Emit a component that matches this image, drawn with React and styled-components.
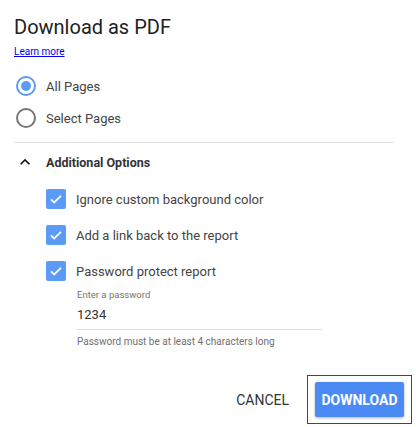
import React from "react";
import styled, { createGlobalStyle } from "styled-components";

const Global = createGlobalStyle`
  html, body { margin: 0; padding: 0; background: #fff; }
  body { font-family: Roboto, "Noto Sans", Arial, sans-serif; }
  * { box-sizing: border-box; }
`;

const Dialog = styled.div`
  width: 416px;
  height: 427px;
  padding: 15px 0 0 14px;
  background: #fff;
  color: #212121;
`;

const Body = styled.div`
  padding-right: 22px;
`;

const Title = styled.h1`
  margin: 0;
  font-size: 20px;
  line-height: 24px;
  font-weight: 400;
  color: #212121;
`;

const LearnMore = styled.a`
  display: block;
  margin-top: 7px;
  font-size: 10px;
  line-height: 12px;
  color: #0000ee;
  text-decoration: underline;
  width: max-content;
`;

const RadioGroup = styled.div`
  margin-top: 12px;
  display: flex;
  flex-direction: column;
`;

const RadioRow = styled.label`
  display: flex;
  align-items: center;
  gap: 10px;
  height: 32px;
  padding-left: 2px;
  font-size: 13px;
  color: #444;
`;

const RadioCircle = styled.span`
  width: 20px;
  height: 20px;
  border-radius: 50%;
  border: 2px solid ${(p) => (p.$checked ? "#5b9bf6" : "#767676")};
  display: flex;
  align-items: center;
  justify-content: center;
  &::after {
    content: "";
    width: 10px;
    height: 10px;
    border-radius: 50%;
    background: #5b9bf6;
    display: ${(p) => (p.$checked ? "block" : "none")};
  }
`;

const Divider = styled.hr`
  margin: 8px 0 0;
  border: 0;
  height: 1px;
  background: #e0e0e0;
`;

const SectionHeader = styled.div`
  display: flex;
  align-items: center;
  height: 38px;
  gap: 11px;
  font-size: 12.5px;
  font-weight: 700;
  color: #333;
`;

const CheckRow = styled.label`
  display: flex;
  align-items: center;
  gap: 10px;
  height: 36px;
  padding-left: 32px;
  font-size: 13px;
  color: #444;
`;

const CheckBox = styled.span`
  width: 20px;
  height: 20px;
  border-radius: 2px;
  background: #5b9bf6;
  display: flex;
  align-items: center;
  justify-content: center;
`;

const Field = styled.div`
  padding-left: 63px;
  display: flex;
  flex-direction: column;
`;

const FieldLabel = styled.span`
  font-size: 9.5px;
  line-height: 12px;
  color: #757575;
`;

const Input = styled.div`
  width: 245px;
  margin-top: 6px;
  padding-bottom: 6px;
  font-size: 13px;
  line-height: 16px;
  color: #333;
  border-bottom: 1px solid #dcdcdc;
`;

const Helper = styled.span`
  margin-top: 6px;
  font-size: 10px;
  line-height: 12px;
  color: #707070;
`;

const Actions = styled.div`
  margin-top: 27px;
  display: flex;
  justify-content: flex-end;
  align-items: center;
  padding-right: 4px;
`;

const FlatButton = styled.button`
  height: 35px;
  padding: 0 8px;
  margin-right: 10px;
  border: 0;
  background: transparent;
  font-family: inherit;
  font-size: 14px;
  color: #333;
  cursor: pointer;
`;

const Highlight = styled.div`
  padding: 7px 8px;
  background: #fff;
  box-shadow: inset 0 0 0 1px rgb(235, 0, 0);
`;

const PrimaryButton = styled.button`
  display: block;
  height: 35px;
  width: 89px;
  padding: 0;
  border: 0;
  border-radius: 2px;
  background: #4a8af4;
  color: #fff;
  font-family: inherit;
  font-size: 14px;
  font-weight: 700;
  box-shadow: 0 1px 3px rgba(0, 0, 0, 0.3);
  cursor: pointer;
`;

const Check = () => (
  <svg width="16" height="16" viewBox="0 0 16 16">
    <path d="M3 8.4l3.2 3.1L13 4.8" fill="none" stroke="#fff" strokeWidth="1.8" />
  </svg>
);

const Chevron = () => (
  <svg width="20" height="20" viewBox="0 0 24 24" style={{ marginLeft: 1 }}>
    <path d="M7.41 15.41L12 10.83l4.59 4.58L18 14l-6-6-6 6z" fill="#111" />
  </svg>
);

export default function App() {
  const options = [
    "Ignore custom background color",
    "Add a link back to the report",
    "Password protect report",
  ];
  return (
    <Dialog>
      <Global />
      <Body>
        <Title>Download as PDF</Title>
        <LearnMore href="#">Learn more</LearnMore>
        <RadioGroup>
          <RadioRow>
            <RadioCircle $checked />
            All Pages
          </RadioRow>
          <RadioRow>
            <RadioCircle />
            Select Pages
          </RadioRow>
        </RadioGroup>
        <Divider />
        <SectionHeader>
          <Chevron />
          Additional Options
        </SectionHeader>
        {options.map((o) => (
          <CheckRow key={o}>
            <CheckBox>
              <Check />
            </CheckBox>
            {o}
          </CheckRow>
        ))}
        <Field>
          <FieldLabel>Enter a password</FieldLabel>
          <Input>1234</Input>
          <Helper>Password must be at least 4 characters long</Helper>
        </Field>
      </Body>
      <Actions>
        <FlatButton>CANCEL</FlatButton>
        <Highlight>
          <PrimaryButton>DOWNLOAD</PrimaryButton>
        </Highlight>
      </Actions>
    </Dialog>
  );
}
